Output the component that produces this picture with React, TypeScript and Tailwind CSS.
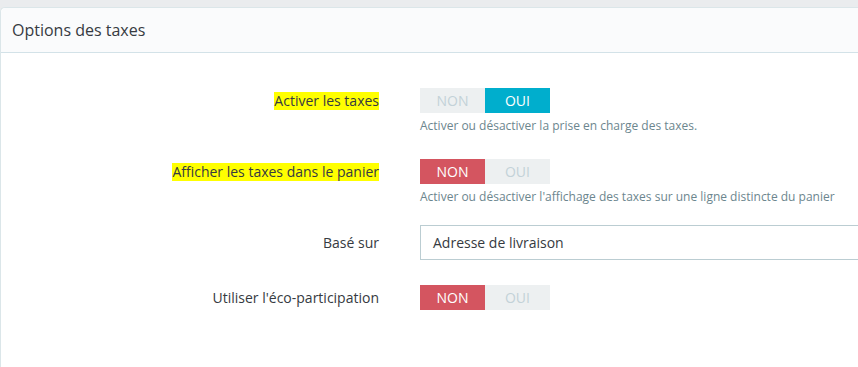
const Toggle = ({ on }: { on: boolean }) => (
  <div className="flex h-[25px] w-[130px] text-[14px] uppercase">
    <span
      className={
        on
          ? "flex w-[65px] items-center justify-center bg-[#edf0f1] text-[#c3d2d8]"
          : "flex w-[65px] items-center justify-center bg-[#d45560] text-white"
      }
    >
      NON
    </span>
    <span
      className={
        on
          ? "flex w-[65px] items-center justify-center bg-[#00aecd] text-white"
          : "flex w-[65px] items-center justify-center bg-[#edf0f1] text-[#c3d2d8]"
      }
    >
      OUI
    </span>
  </div>
);

const Row = ({
  label,
  mark,
  help,
  children,
  className,
}: {
  label: string;
  mark?: boolean;
  help?: string;
  children: React.ReactNode;
  className?: string;
}) => (
  <div className={"flex " + (className ?? "")}>
    <div className="flex h-[25px] w-[378px] shrink-0 items-center justify-end text-[14px] text-[#363a41]">
      {mark ? <span className="bg-[#ffff00] leading-[18px]">{label}</span> : <span>{label}</span>}
    </div>
    <div className="ml-[41px] flex flex-col">
      {children}
      {help && <p className="mt-[5px] text-[12px] leading-[16px] text-[#6c868e]">{help}</p>}
    </div>
  </div>
);

export default function App() {
  return (
    <div
      className="h-[367px] w-[858px] overflow-hidden bg-[#eaecee] pt-[7px]"
      style={{ fontFamily: '"Open Sans", sans-serif' }}
    >
      <div className="h-[400px] w-[900px] rounded-tl-[5px] border-l border-t border-[#dbe6e9] bg-white">
        <div className="flex h-[45px] items-center rounded-tl-[5px] border-b border-[#d3e2e8] bg-[#fafbfc] pl-[11px] text-[16px] text-[#363a41]">
          Options des taxes
        </div>
        <div className="pt-[35px]">
          <Row label="Activer les taxes" mark help="Activer ou désactiver la prise en charge des taxes.">
            <Toggle on />
          </Row>
          <Row
            className="mt-[25px]"
            label="Afficher les taxes dans le panier"
            mark
            help="Activer ou désactiver l'affichage des taxes sur une ligne distincte du panier"
          >
            <Toggle on={false} />
          </Row>
          <div className="mt-[20px] flex">
            <div className="flex h-[35px] w-[378px] shrink-0 items-center justify-end text-[14px] text-[#363a41]">
              Basé sur
            </div>
            <div className="ml-[41px] flex h-[35px] w-[460px] items-center border border-[#bbcdd2] pl-[12px] text-[14px] text-[#363a41]">
              Adresse de livraison
            </div>
          </div>
          <Row className="mt-[25px]" label="Utiliser l'éco-participation">
            <Toggle on={false} />
          </Row>
        </div>
      </div>
    </div>
  );
}
